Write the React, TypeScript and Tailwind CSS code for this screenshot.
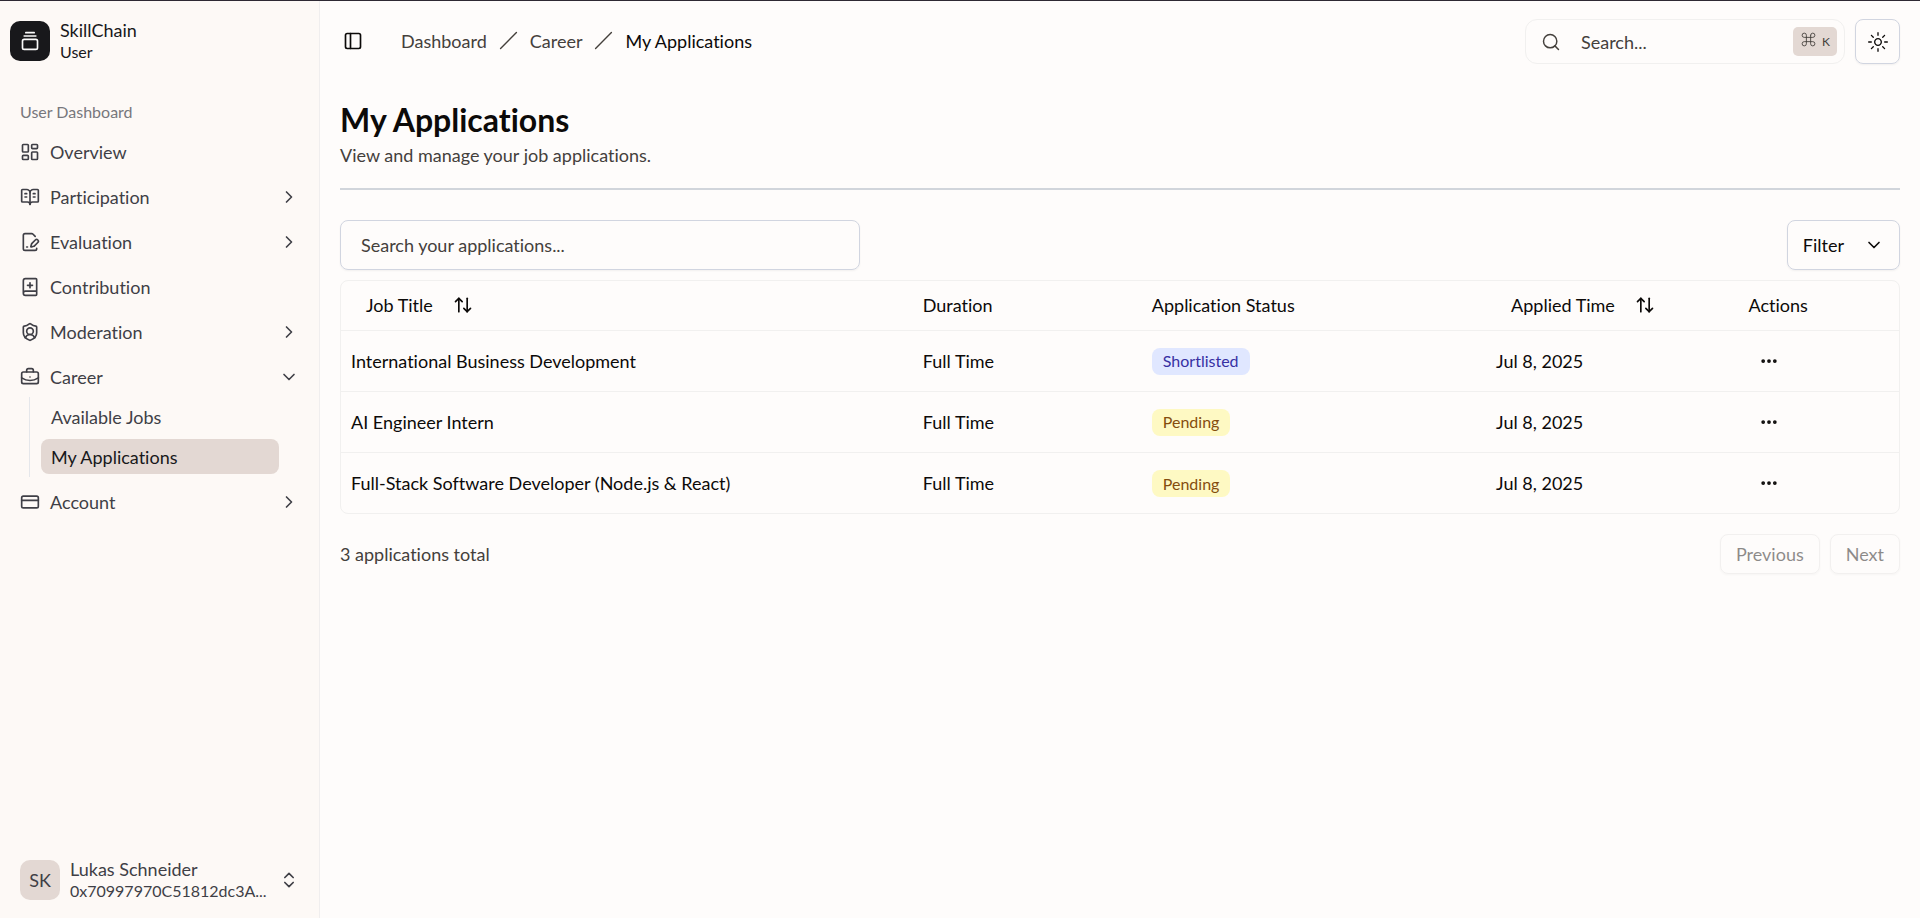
import React from "react";
import {
  ArrowUpDown,
  BookOpenText,
  BookPlus,
  BriefcaseBusiness,
  ChevronDown,
  ChevronRight,
  ChevronsUpDown,
  Command,
  CreditCard,
  Ellipsis,
  FilePenLine,
  GalleryVerticalEnd,
  LayoutDashboard,
  PanelLeft,
  Search,
  ShieldUser,
  Slash,
  type LucideIcon,
} from "lucide-react";
import { RxSun } from "react-icons/rx";

type NavItem = {
  label: string;
  icon: LucideIcon;
  expandable?: boolean;
  children?: { label: string; active?: boolean }[];
};

const navItems: NavItem[] = [
  { label: "Overview", icon: LayoutDashboard },
  { label: "Participation", icon: BookOpenText, expandable: true },
  { label: "Evaluation", icon: FilePenLine, expandable: true },
  { label: "Contribution", icon: BookPlus },
  { label: "Moderation", icon: ShieldUser, expandable: true },
  {
    label: "Career",
    icon: BriefcaseBusiness,
    expandable: true,
    children: [{ label: "Available Jobs" }, { label: "My Applications", active: true }],
  },
  { label: "Account", icon: CreditCard, expandable: true },
];

type Status = "Shortlisted" | "Pending";

const applications: { title: string; duration: string; status: Status; applied: string }[] = [
  { title: "International Business Development", duration: "Full Time", status: "Shortlisted", applied: "Jul 8, 2025" },
  { title: "AI Engineer Intern", duration: "Full Time", status: "Pending", applied: "Jul 8, 2025" },
  { title: "Full-Stack Software Developer (Node.js & React)", duration: "Full Time", status: "Pending", applied: "Jul 8, 2025" },
];

const statusStyles: Record<Status, string> = {
  Shortlisted: "bg-[#e0e7ff] text-[#3730a3]",
  Pending: "bg-[#fef9c3] text-[#854d0e]",
};

function NavRow({ item }: { item: NavItem }) {
  const Icon = item.icon;
  const content = (
    <>
      <Icon className="size-5 shrink-0" />
      <span className="flex-1 text-left">{item.label}</span>
      {item.expandable && (item.children ? <ChevronDown className="size-5" /> : <ChevronRight className="size-5" />)}
    </>
  );
  const rowClass = "flex h-10 w-full items-center gap-2.5 rounded-lg px-2.5";
  return (
    <li>
      {item.expandable ? (
        <button type="button" aria-expanded={Boolean(item.children)} className={rowClass}>
          {content}
        </button>
      ) : (
        <a href="#" className={rowClass}>
          {content}
        </a>
      )}
      {item.children && (
        <ul className="ml-[19px] mr-[30px] flex flex-col gap-[5px] border-l border-[#e5e7eb] pb-[3px] pl-[11px] pt-[2px]">
          {item.children.map((child) => (
            <li key={child.label}>
              <a
                href="#"
                aria-current={child.active ? "page" : undefined}
                className={
                  child.active
                    ? "flex h-[35px] items-center rounded-lg bg-[#e3d8d3] px-2.5 text-[#18181b]"
                    : "flex h-[35px] items-center rounded-lg px-2.5"
                }
              >
                {child.label}
              </a>
            </li>
          ))}
        </ul>
      )}
    </li>
  );
}

function Sidebar() {
  return (
    <aside className="flex w-80 shrink-0 flex-col border-r border-[#f0eeee] bg-[#fdf9f6] text-[#3f3f46]">
      <div className="flex items-center gap-2.5 px-2.5 pt-[18px] text-[#18181b]">
        <div className="flex size-10 items-center justify-center rounded-[10px] bg-[#18181b] text-[#fafafa]">
          <GalleryVerticalEnd className="size-5" />
        </div>
        <div>
          <p className="leading-[22px]">SkillChain</p>
          <p className="text-base leading-[22px]">User</p>
        </div>
      </div>
      <nav aria-label="User Dashboard" className="flex-1 px-2.5 pt-[29px]">
        <h2 className="flex h-10 items-center px-2.5 text-base text-[#77777c]">User Dashboard</h2>
        <ul className="flex flex-col gap-[5px]">
          {navItems.map((item) => (
            <NavRow key={item.label} item={item} />
          ))}
        </ul>
      </nav>
      <div className="px-2.5 pb-2">
        <button type="button" className="flex h-[60px] w-full items-center gap-2.5 rounded-lg px-2.5 text-left">
          <span className="flex size-10 shrink-0 items-center justify-center rounded-[10px] bg-[#e3d8d3]">SK</span>
          <span className="flex min-w-0 flex-1 flex-col">
            <span className="leading-[22px]">Lukas Schneider</span>
            <span className="text-base leading-[22px]">0x70997970C51812dc3A...</span>
          </span>
          <ChevronsUpDown className="size-5 shrink-0" />
        </button>
      </div>
    </aside>
  );
}

function TopBar() {
  return (
    <header className="flex items-center justify-between">
      <div className="flex items-center gap-[38px] pb-[2px]">
        <button type="button" aria-label="Toggle sidebar" className="pl-[3px]">
          <PanelLeft className="size-5" />
        </button>
        <nav aria-label="Breadcrumb">
          <ol className="flex items-center gap-3 text-[#44403c]">
            <li><a href="#">Dashboard</a></li>
            <li aria-hidden="true"><Slash className="size-[19px]" strokeWidth={1.75} /></li>
            <li><a href="#">Career</a></li>
            <li aria-hidden="true"><Slash className="size-[19px]" strokeWidth={1.75} /></li>
            <li aria-current="page" className="text-[#0c0a09]">My Applications</li>
          </ol>
        </nav>
      </div>
      <div className="flex items-center gap-2.5">
        <button
          type="button"
          className="flex h-[45px] w-80 items-center rounded-xl border border-[#f1f0ef] pl-[15px] pr-[7px] text-[#44403c]"
        >
          <Search className="size-5" strokeWidth={1.75} />
          <span className="ml-5 flex-1 text-left">Search...</span>
          <kbd className="flex h-[29px] items-center gap-[5px] rounded-[5px] bg-[#e3d8d3] px-[7px] font-[Lato,sans-serif] text-xs">
            <Command className="mb-1 size-[17px]" strokeWidth={1.25} />
            K
          </kbd>
        </button>
        <button
          type="button"
          aria-label="Toggle theme"
          className="flex size-[45px] items-center justify-center rounded-lg border border-[#d1d5e0] shadow-xs"
        >
          <RxSun className="size-5" />
        </button>
      </div>
    </header>
  );
}

function ApplicationsTable() {
  return (
    <div className="mt-2.5 overflow-hidden rounded-lg border border-[#f1f0ef]">
      <table className="w-full table-fixed text-left">
        <colgroup>
          <col className="w-[36.7%]" />
          <col className="w-[14.7%]" />
          <col className="w-[22.1%]" />
          <col className="w-[16.2%]" />
          <col className="w-[10.3%]" />
        </colgroup>
        <thead>
          <tr className="h-[49px] border-b border-[#f1f0ef]">
            <th className="px-2.5 font-normal">
              <button type="button" className="flex items-center gap-5 px-[15px]">
                Job Title
                <ArrowUpDown className="size-5" />
              </button>
            </th>
            <th className="px-2.5 font-normal">Duration</th>
            <th className="px-2.5 font-normal">Application Status</th>
            <th className="px-2.5 font-normal">
              <button type="button" className="flex items-center gap-5 px-[15px]">
                Applied Time
                <ArrowUpDown className="size-5" />
              </button>
            </th>
            <th className="px-2.5 font-normal">Actions</th>
          </tr>
        </thead>
        <tbody>
          {applications.map((row) => (
            <tr key={row.title} className="h-[61px] border-b border-[#f1f0ef] last:border-b-0">
              <td className="px-2.5">{row.title}</td>
              <td className="px-2.5">{row.duration}</td>
              <td className="px-2.5">
                <span className={`inline-flex h-[27px] items-center rounded-lg px-[11px] align-middle text-base ${statusStyles[row.status]}`}>
                  {row.status}
                </span>
              </td>
              <td className="px-2.5">{row.applied}</td>
              <td className="px-2.5">
                <button type="button" aria-label={`Actions for ${row.title}`} className="flex size-10 items-center justify-center">
                  <Ellipsis className="size-5" strokeWidth={2.5} />
                </button>
              </td>
            </tr>
          ))}
        </tbody>
      </table>
    </div>
  );
}

export default function App() {
  return (
    <div className="flex min-h-screen border-t border-[#2e2933] bg-[#fefcfb] font-[Lato,sans-serif] text-[18px] leading-[26px] text-[#0c0a09] [font-variant-ligatures:none]">
      <Sidebar />
      <main className="min-w-0 flex-1 px-5 pt-[18px]">
        <TopBar />
        <h1 className="mt-9 text-[32px] font-bold leading-10">My Applications</h1>
        <p className="mt-[2px] text-[#44403c]">View and manage your job applications.</p>
        <hr className="mt-5 border-t-2 border-[#d1d5db]" />
        <div className="mt-[30px] flex items-center justify-between">
          <input
            type="text"
            aria-label="Search your applications"
            placeholder="Search your applications..."
            className="h-[50px] w-1/3 rounded-lg border border-[#d1d5e0] px-5 shadow-xs placeholder:text-[#44403c]"
          />
          <button
            type="button"
            className="flex h-[50px] items-center gap-5 rounded-lg border border-[#d1d5e0] px-[15px] shadow-xs"
          >
            Filter
            <ChevronDown className="size-5" />
          </button>
        </div>
        <ApplicationsTable />
        <div className="mt-5 flex items-center justify-between text-[#44403c]">
          <p>3 applications total</p>
          <div className="flex gap-2.5">
            <button type="button" disabled className="h-10 rounded-lg border border-[#e8e6e4] px-[15px] text-[#1c1917] opacity-50 shadow-xs">
              Previous
            </button>
            <button type="button" disabled className="h-10 rounded-lg border border-[#e8e6e4] px-[15px] text-[#1c1917] opacity-50 shadow-xs">
              Next
            </button>
          </div>
        </div>
      </main>
    </div>
  );
}
